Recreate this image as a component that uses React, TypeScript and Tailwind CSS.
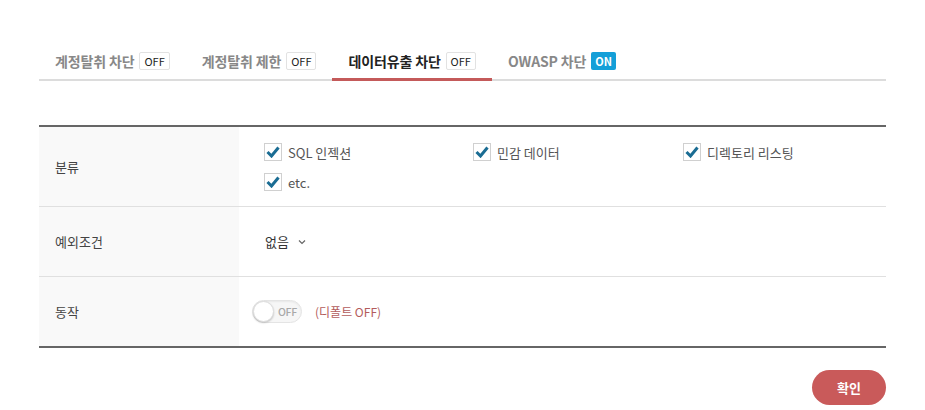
import { ReactElement } from "react";

const font = { fontFamily: '"Noto Sans CJK KR", "Noto Sans", sans-serif' };

type Tab = { label: string; on: boolean; active?: boolean };

const tabs: Tab[] = [
  { label: "계정탈취 차단", on: false },
  { label: "계정탈취 제한", on: false },
  { label: "데이터유출 차단", on: false, active: true },
  { label: "OWASP 차단", on: true },
];

const categories = ["SQL 인젝션", "민감 데이터", "디렉토리 리스팅", "etc."];

const Check = ({ label }: { label: string }): ReactElement => (
  <label className="flex items-center gap-[6px] h-[18px]">
    <span className="w-[18px] h-[18px] border border-[#d0d0d0] bg-white flex items-center justify-center">
      <svg width="14" height="12" viewBox="0 0 14 12">
        <path d="M1.5 6 L5.5 10 L12.5 1.5" fill="none" stroke="#1a6c93" strokeWidth="3" />
      </svg>
    </span>
    <span className="text-[13px] text-[#555] leading-none">{label}</span>
  </label>
);

const App = (): ReactElement => {
  return (
    <div className="w-[925px] h-[410px] bg-white" style={font}>
      <div className="px-[39px] pt-[48px]">
        {/* Tabs */}
        <div className="flex border-b-2 border-[#dcdcdc] h-[33px]">
          {tabs.map((t) => (
            <div
              key={t.label}
              className={`flex items-start pt-[4px] px-[16px] -mb-[2px] ${
                t.active ? "border-b-[3px] border-[#c45a5a]" : ""
              }`}
            >
              <span
                className={`text-[14px] leading-[18px] font-semibold tracking-[-0.15px] ${
                  t.active ? "text-[#222]" : "text-[#888]"
                }`}
              >
                {t.label}
              </span>
              {t.on ? (
                <span className="ml-[5px] h-[18px] px-[4px] bg-[#149fd8] rounded-[2px] text-white text-[11px] font-bold leading-[18px]">
                  ON
                </span>
              ) : (
                <span className="ml-[5px] h-[18px] px-[4px] border border-[#e2e2e2] rounded-[2px] text-[#222] text-[11px] leading-[16px]">
                  OFF
                </span>
              )}
            </div>
          ))}
        </div>

        {/* Table */}
        <div className="mt-[44px] border-t-2 border-b-2 border-[#666]">
          <div className="flex border-b border-[#e0e0e0] h-[80px]">
            <div className="w-[200px] bg-[#f9f9f9] flex items-center pl-[16px] text-[13px] text-[#444]">
              분류
            </div>
            <div className="flex-1 pl-[25px] pt-[16px]">
              <div className="grid grid-cols-[209px_210px_200px] gap-y-[12px]">
                {categories.map((c) => (
                  <Check key={c} label={c} />
                ))}
              </div>
            </div>
          </div>
          <div className="flex border-b border-[#e0e0e0] h-[70px]">
            <div className="w-[200px] bg-[#f9f9f9] flex items-center pl-[16px] text-[13px] text-[#444]">
              예외조건
            </div>
            <div className="flex-1 flex items-center pl-[26px] text-[13px] text-[#333]">
              <span>없음</span>
              <svg className="ml-[9px]" width="8" height="6" viewBox="0 0 8 6">
                <path d="M1 1.5 L4 4.5 L7 1.5" fill="none" stroke="#666" strokeWidth="1.2" />
              </svg>
            </div>
          </div>
          <div className="flex h-[69px]">
            <div className="w-[200px] bg-[#f9f9f9] flex items-center pl-[16px] text-[13px] text-[#444]">
              동작
            </div>
            <div className="flex-1 flex items-center pl-[13px]">
              <div className="relative w-[50px] h-[23px] rounded-full border border-[#e4e4e4] bg-[#f6f6f6] shadow-[inset_0_1px_2px_rgba(0,0,0,0.06)]">
                <span className="absolute left-[0px] top-[0px] w-[21px] h-[21px] rounded-full bg-white border border-[#ddd] shadow-[0_1px_2px_rgba(0,0,0,0.2)]" />
                <span className="absolute left-[25px] top-[4px] text-[10.5px] leading-[14px] tracking-[-0.3px] text-[#a8a8a8] font-medium">
                  OFF
                </span>
              </div>
              <span className="ml-[13px] text-[12px] text-[#b35c5c]">(디폴트 OFF)</span>
            </div>
          </div>
        </div>

        {/* Footer */}
        <div className="flex justify-end mt-[22px]">
          <button className="w-[74px] h-[35px] rounded-full bg-[#c95a5a] text-white text-[13px] font-bold">
            확인
          </button>
        </div>
      </div>
    </div>
  );
};

export default App;
